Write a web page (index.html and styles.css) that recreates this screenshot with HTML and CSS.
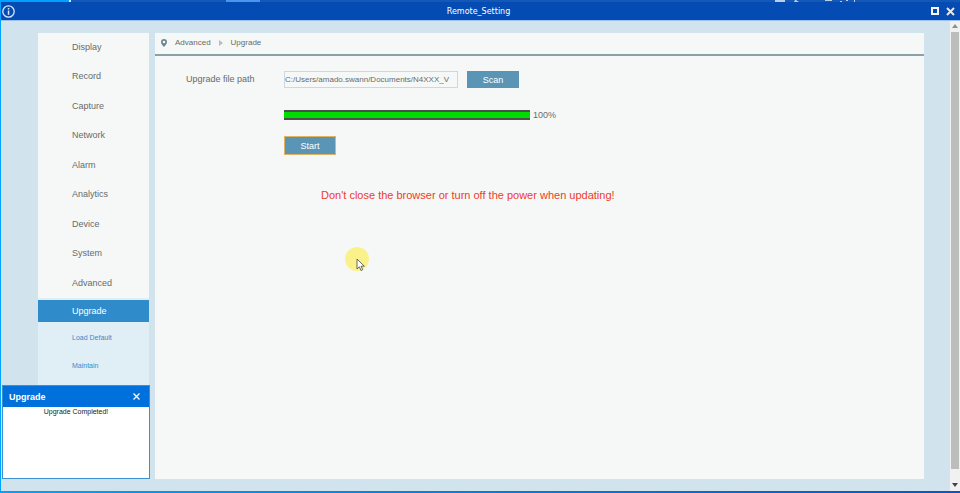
FILE: index.html
```html
<!DOCTYPE html>
<html lang="en">
<head>
    <meta charset="UTF-8">
    <meta name="viewport" content="width=device-width, initial-scale=1.0">
    <title>Remote_Setting</title>
    <link rel="stylesheet" href="styles.css">
</head>
<body>
    <div class="desktop-strip">
        <span class="strip-start"></span>
        <span class="strip-mark"></span>
        <span class="strip-tab"></span>
        <svg class="strip-icons" width="80" height="2" viewBox="0 0 80 2">
            <path d="M0 0h10v2H0zM20 0h1l3 2h-5zM50 0h7v1h-7zM65 1h2v1h-2zM71 0h2v1h-2zM80 0v2h-1V0z" fill="#b9cfe8"/>
        </svg>
    </div>
    <header class="title-bar">
        <svg class="info-icon" width="13" height="13" viewBox="0 0 13 13">
            <circle cx="6.500" cy="6.500" r="5.700" fill="none" stroke="#d9e8fa" stroke-width="1.300"/>
            <path d="M5.800 3h1.500v1.400H5.800zM5.800 5.500h1.500v4.300H5.800z" fill="#d9e8fa"/>
        </svg>
        <h1>Remote_Setting</h1>
        <div class="window-buttons">
            <button type="button" aria-label="Maximize">
                <svg width="8" height="8" viewBox="0 0 8 8"><path d="M1 1h6v6H1z" fill="none" stroke="#f2f5fa" stroke-width="2"/></svg>
            </button>
            <button type="button" aria-label="Close">
                <svg width="9" height="9" viewBox="0 0 9 9"><path d="M1 1l7 7M8 1L1 8" stroke="#e6e8ec" stroke-width="2"/></svg>
            </button>
        </div>
    </header>

    <div class="window-body">
        <div class="page">
            <nav class="sidebar">
                <ul class="menu">
                    <li><a href="#">Display</a></li>
                    <li><a href="#">Record</a></li>
                    <li><a href="#">Capture</a></li>
                    <li><a href="#">Network</a></li>
                    <li><a href="#">Alarm</a></li>
                    <li><a href="#">Analytics</a></li>
                    <li><a href="#">Device</a></li>
                    <li><a href="#">System</a></li>
                    <li><a href="#">Advanced</a></li>
                </ul>
                <ul class="submenu">
                    <li><a href="#" class="active">Upgrade</a></li>
                    <li><a href="#">Load Default</a></li>
                    <li><a href="#">Maintain</a></li>
                </ul>
            </nav>

            <main class="content">
                <div class="breadcrumb">
                    <svg width="6" height="8" viewBox="0 0 6 8"><path d="M3 0a3 3 0 0 0-3 3c0 2 3 5 3 5s3-3 3-5a3 3 0 0 0-3-3zm0 1.700a1.300 1.300 0 1 1 0 2.600 1.300 1.300 0 0 1 0-2.600z" fill="#6b8794"/></svg>
                    <a href="#">Advanced</a>
                    <svg width="4" height="6" viewBox="0 0 4 6"><path d="M0 0l4 3-4 3z" fill="#b4bec2"/></svg>
                    <a href="#">Upgrade</a>
                </div>

                <form class="upgrade-form">
                    <label for="file-path">Upgrade file path</label>
                    <div class="field">
                        <input type="text" id="file-path" value="C:/Users/amado.swann/Documents/N4XXX_V">
                        <button type="button">Scan</button>
                    </div>
                    <div class="field progress-row">
                        <div class="progress" role="progressbar" aria-label="Upgrade progress" aria-valuenow="100">
                            <div class="progress-fill" style="width: 100%"></div>
                        </div>
                        <span>100%</span>
                    </div>
                    <div class="field">
                        <button type="button" class="focused">Start</button>
                    </div>
                    <p class="warning">Don't close the browser or turn off the power when updating!</p>
                </form>
            </main>
        </div>

        <div class="scrollbar">
            <svg width="6" height="4" viewBox="0 0 6 4"><path d="M0 4l3-4 3 4z" fill="#8c8f90"/></svg>
            <div class="thumb"></div>
            <svg width="6" height="4" viewBox="0 0 6 4"><path d="M0 0l3 4 3-4z" fill="#444"/></svg>
        </div>
    </div>

    <section class="popup">
        <header>
            <h2>Upgrade</h2>
            <button type="button" aria-label="Close message">
                <svg width="7" height="7" viewBox="0 0 7 7"><path d="M.5.5l6 6M6.500.5l-6 6" stroke="#fff" stroke-width="1.300"/></svg>
            </button>
        </header>
        <p>Upgrade Completed!</p>
    </section>

    <div class="pointer">
        <svg width="24" height="26" viewBox="0 0 24 26">
            <circle cx="12" cy="12" r="12" fill="#fbf18b"/>
            <path d="M12 12v10l2.400-2.200 1.600 3.700 1.700-.8-1.600-3.500h3.200z" fill="#fff" stroke="#444" stroke-width=".8"/>
        </svg>
    </div>
</body>
</html>
```

FILE: styles.css
```css
* {
    box-sizing: border-box;
}

body {
    margin: 0;
    height: 100vh;
    display: flex;
    flex-direction: column;
    font-family: "Liberation Sans", Arial, sans-serif;
    font-size: 9px;
    color: #686b6b;
    background: #d1e4ee;
    border-left: 1px solid #00a2ff;
    border-bottom: 2px solid #00a2ff;
    border-image: linear-gradient(to right, #00a2ff, #0a55c8) 1;
    border-top: 0;
    border-right: 0;
    overflow: hidden;
}

h1, h2, p, ul {
    margin: 0;
    padding: 0;
}

ul {
    list-style: none;
}

a {
    color: inherit;
    text-decoration: none;
}

button {
    font: inherit;
    border: 0;
    padding: 0;
    background: none;
    cursor: pointer;
}

svg {
    display: block;
}

/* desktop visible above the window */
.desktop-strip {
    flex: none;
    display: flex;
    height: 2px;
    background: #1557b5;
}

.strip-start {
    width: 68px;
    background: #00a2ff;
}

.strip-mark {
    width: 2px;
    background: #d5e5f2;
}

.strip-tab {
    width: 34px;
    margin-left: 155px;
    background: #4b95ee;
}

.strip-icons {
    margin-left: auto;
    margin-right: 105px;
}

.title-bar {
    flex: none;
    display: grid;
    grid-template-columns: 1fr auto 1fr;
    align-items: center;
    height: 19px;
    padding: 0 5px 0 1px;
    background: #054bb4;
    border-bottom: 1px solid #9cc0ea;
}

.title-bar h1 {
    font-family: "DejaVu Sans", Verdana, sans-serif;
    font-size: 8px;
    font-weight: normal;
    color: #fff;
}

.window-buttons {
    display: flex;
    justify-content: flex-end;
    align-items: center;
    gap: 7px;
}

.window-body {
    flex: 1;
    min-height: 0;
    display: flex;
}

.page {
    flex: 1;
    display: flex;
    gap: 6px;
    padding: 12px 26px 12px 37px;
}

.sidebar {
    width: 111px;
    background: #e0eef6;
}

.menu {
    display: grid;
    row-gap: 1px;
    padding-bottom: 1px;
    background: #f5f8f6;
}

.menu a {
    display: block;
    padding-left: 34px;
    line-height: 28px;
}

/* every other row is a pixel taller */
.menu li:nth-child(even) a {
    line-height: 29px;
}

.submenu {
    padding-top: 2px;
}

.submenu a {
    display: block;
    padding-left: 34px;
    font-size: 7px;
    line-height: 28px;
    color: #3d8ac8;
}

.submenu .active {
    margin-bottom: 2px;
    font-size: 9px;
    line-height: 22px;
    color: #fff;
    background: #308bcb;
}

.content {
    flex: 1;
    background: #f5f8f6;
}

.breadcrumb {
    display: flex;
    align-items: center;
    gap: 8px;
    height: 23px;
    padding: 0 6px 2px;
    font-size: 8px;
    border-bottom: 2px solid #8aa1ab;
}

.upgrade-form {
    display: grid;
    grid-template-columns: 98px 1fr;
    row-gap: 16px;
    padding: 15px 0 0 31px;
}

.upgrade-form label {
    line-height: 17px;
}

.field {
    grid-column: 2;
    display: flex;
    align-items: center;
    gap: 9px;
}

.field input {
    width: 174px;
    height: 17px;
    padding: 0;
    font: inherit;
    font-size: 8px;
    color: inherit;
    background: transparent;
    border: 1px solid #d3d6d4;
}

.field button {
    width: 52px;
    height: 17px;
    color: #fff;
    background: #5b95b5;
}

.field .focused {
    height: 19px;
    border: 1px solid #dfb565;
}

.progress-row {
    gap: 3px;
    padding-top: 6px;
}

.progress {
    width: 246px;
    height: 10px;
    border: solid #4a4f4a;
    border-width: 2px 0;
}

.progress-fill {
    height: 6px;
    background: #00dc00;
}

.warning {
    grid-column: 2;
    padding: 18px 0 0 37px;
    font-size: 11px;
    color: #f03a2c;
}

.scrollbar {
    flex: none;
    display: flex;
    flex-direction: column;
    align-items: center;
    gap: 4px;
    width: 10px;
    padding: 3px 1px 4px;
    background: #f0f1f0;
}

.thumb {
    flex: 1;
    width: 8px;
    margin-bottom: 10px;
    background: #bcbebc;
}

/* message box over the lower left corner */
.popup {
    position: absolute;
    left: 2px;
    bottom: 14px;
    width: 148px;
    height: 94px;
    background: #fff;
    border: 1px solid #3c8fd0;
}

.popup header {
    display: flex;
    justify-content: space-between;
    align-items: center;
    height: 21px;
    padding: 0 9px 0 6px;
    color: #fff;
    background: #0070dd;
}

.popup h2 {
    font-size: 9px;
}

.popup p {
    font-size: 7px;
    line-height: 9px;
    text-align: center;
    color: #222;
}

.pointer {
    position: absolute;
    left: 345px;
    top: 247px;
    pointer-events: none;
}
```
